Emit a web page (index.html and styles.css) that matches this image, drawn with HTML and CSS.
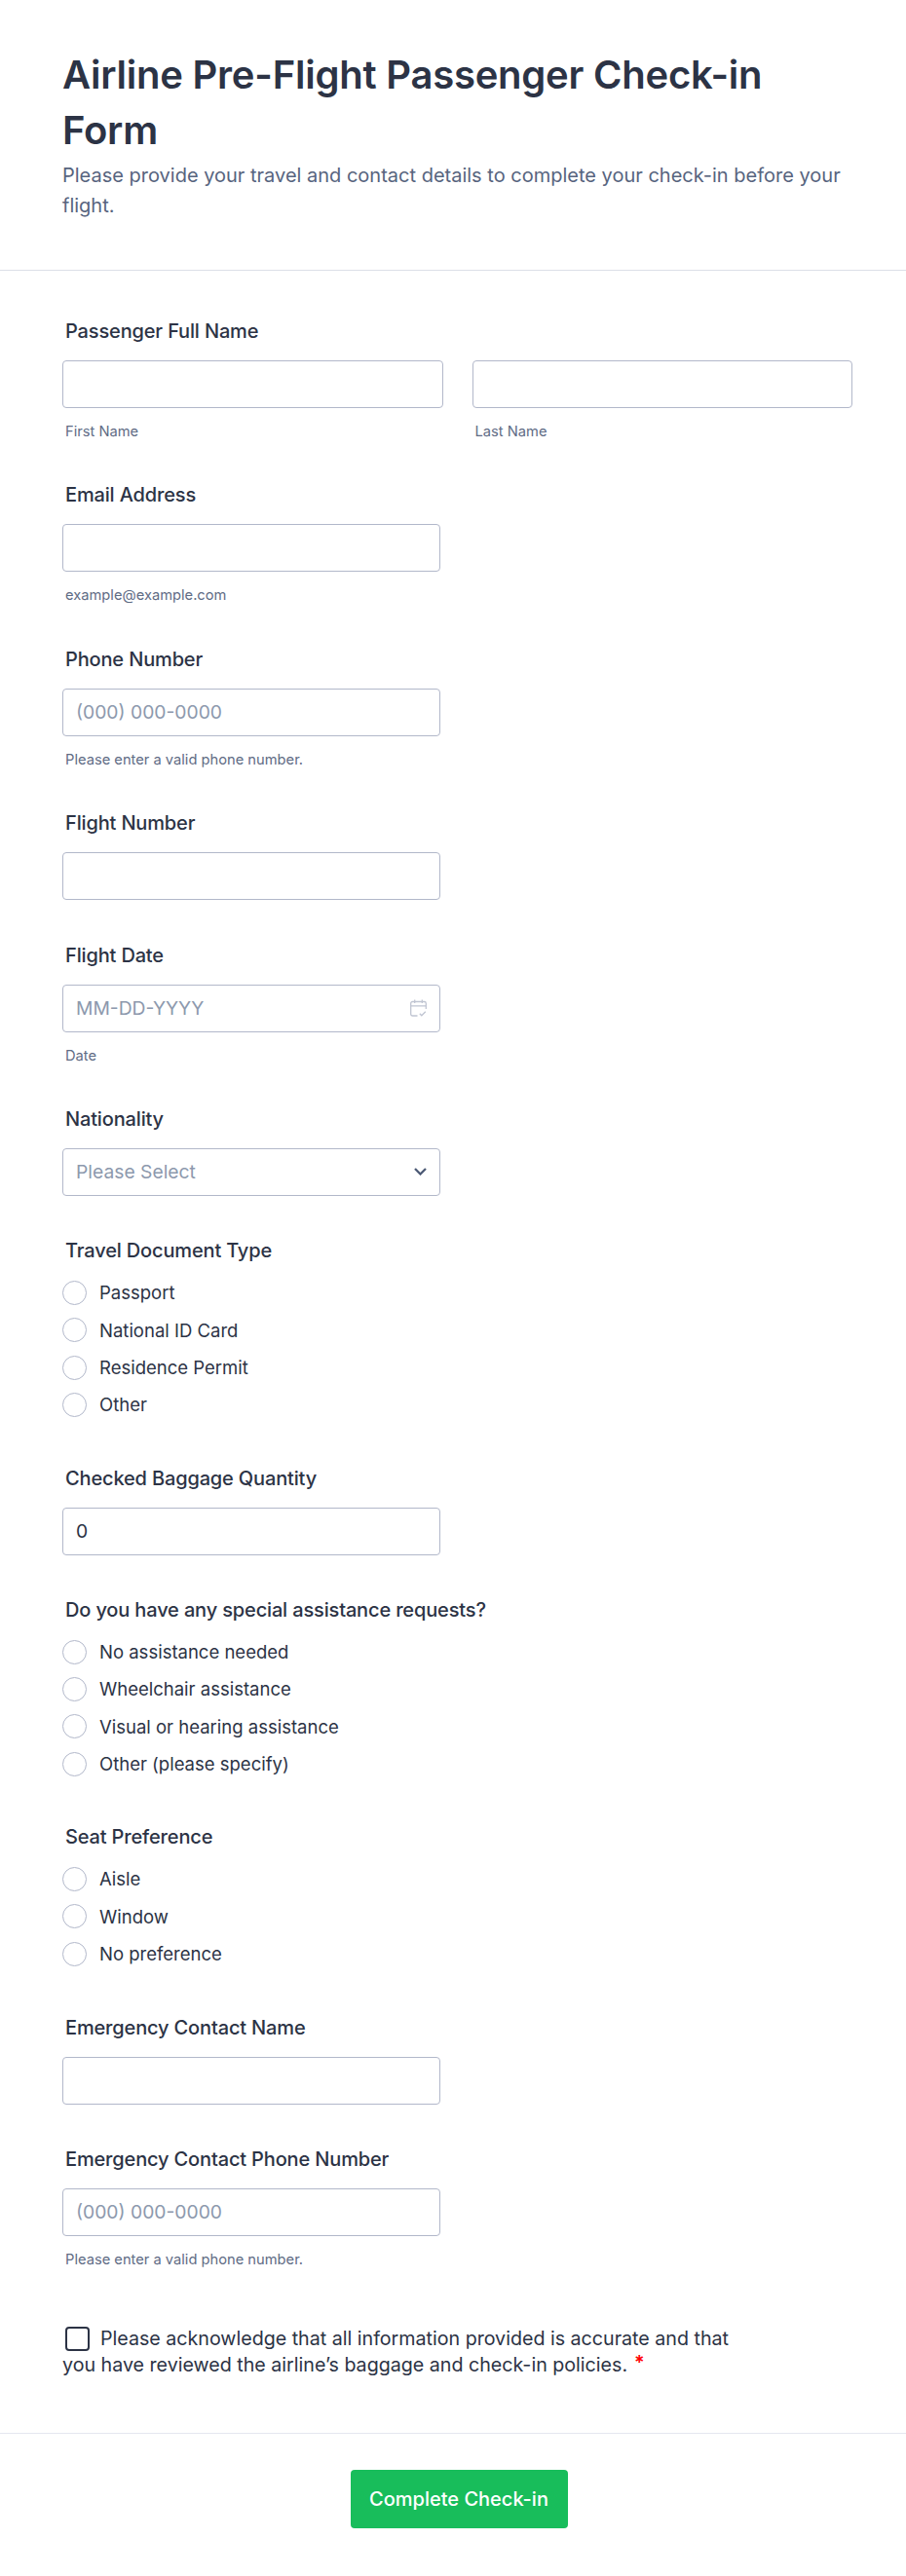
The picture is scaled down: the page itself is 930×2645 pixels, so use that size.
FILE: index.html
```html
<!DOCTYPE html>
<html lang="en">
<head>
<meta charset="utf-8">
<title>Airline Pre-Flight Passenger Check-in Form</title>
<link rel="stylesheet" href="styles.css">
</head>
<body>
<form class="form">
  <header class="head">
    <h1>Airline Pre-Flight Passenger Check-in Form</h1>
    <p>Please provide your travel and contact details to complete your check-in before your flight.</p>
  </header>
  <div class="fields">
    <div class="field">
      <div class="label">Passenger Full Name</div>
      <div class="pair">
        <div class="col"><div class="input"></div><div class="sub">First Name</div></div>
        <div class="col"><div class="input"></div><div class="sub">Last Name</div></div>
      </div>
    </div>
    <div class="field">
      <div class="label">Email Address</div>
      <div class="input short"></div>
      <div class="sub">example@example.com</div>
    </div>
    <div class="field">
      <div class="label">Phone Number</div>
      <div class="input short ph">(000) 000-0000</div>
      <div class="sub">Please enter a valid phone number.</div>
    </div>
    <div class="field">
      <div class="label">Flight Number</div>
      <div class="input short"></div>
    </div>
    <div class="field">
      <div class="label">Flight Date</div>
      <div class="input short ph spread">MM-DD-YYYY
        <svg class="cal" width="17" height="18" viewBox="0 0 17 18" fill="none" stroke="#c0c5d2" stroke-width="1.300"><path d="M7.500 17H2.500A1.800 1.800 0 0 1 .7 15.200V4.300A1.800 1.800 0 0 1 2.500 2.500h12a1.800 1.800 0 0 1 1.800 1.800V10M.7 6.800h15.600M4.700 .5v3.500M12.300 .5v3.500M9.800 14.800l2 2 4-4"/></svg>
      </div>
      <div class="sub">Date</div>
    </div>
    <div class="field">
      <div class="label">Nationality</div>
      <div class="input short ph spread">Please Select
        <svg class="chev" width="13" height="8" viewBox="0 0 13 8" fill="none" stroke="#4c5a75" stroke-width="2.300"><path d="M1 1l5.500 5.500L12 1"/></svg>
      </div>
    </div>
    <div class="field field-radio">
      <div class="label">Travel Document Type</div>
      <div class="radios">
        <div class="radio"><span class="dot"></span>Passport</div>
        <div class="radio"><span class="dot"></span>National ID Card</div>
        <div class="radio"><span class="dot"></span>Residence Permit</div>
        <div class="radio"><span class="dot"></span>Other</div>
      </div>
    </div>
    <div class="field">
      <div class="label">Checked Baggage Quantity</div>
      <div class="input short val">0</div>
    </div>
    <div class="field field-radio">
      <div class="label">Do you have any special assistance requests?</div>
      <div class="radios">
        <div class="radio"><span class="dot"></span>No assistance needed</div>
        <div class="radio"><span class="dot"></span>Wheelchair assistance</div>
        <div class="radio"><span class="dot"></span>Visual or hearing assistance</div>
        <div class="radio"><span class="dot"></span>Other (please specify)</div>
      </div>
    </div>
    <div class="field field-radio">
      <div class="label">Seat Preference</div>
      <div class="radios">
        <div class="radio"><span class="dot"></span>Aisle</div>
        <div class="radio"><span class="dot"></span>Window</div>
        <div class="radio"><span class="dot"></span>No preference</div>
      </div>
    </div>
    <div class="field">
      <div class="label">Emergency Contact Name</div>
      <div class="input short"></div>
    </div>
    <div class="field">
      <div class="label">Emergency Contact Phone Number</div>
      <div class="input short ph">(000) 000-0000</div>
      <div class="sub">Please enter a valid phone number.</div>
    </div>
    <div class="ack"><span class="box"></span>Please acknowledge that all information provided is accurate and that you have reviewed the airline’s baggage and check-in policies.<span class="req">*</span></div>
  </div>
  <footer class="foot"><button type="button" class="submit">Complete Check-in</button></footer>
</form>
</body>
</html>
```
FILE: styles.css
```css
* { box-sizing: border-box; }
html, body { margin: 0; padding: 0; background: #fff; }
body { font-family: Inter, "Liberation Sans", sans-serif; color: #2c3345; }
.form { width: 930px; height: 2645px; display: flex; flex-direction: column; }
.head { padding: 48px 64px 0; border-bottom: 1px solid #dcdfe8; height: 278px; }
.head h1 { margin: 0; font-size: 40px; line-height: 57px; font-weight: 600; letter-spacing: -0.23px; color: #2c3345; }
.head p { margin: 3px 0 0; font-size: 20px; line-height: 31px; color: #57647e; }
.fields { padding: 50px 64px 0; height: 2220px; }
.field { margin-bottom: 44.400px; }
.field-radio { margin-bottom: 50.400px; }
.label { font-size: 20px; font-weight: 500; line-height: 24px; letter-spacing: -0.15px; margin: 0 0 18px 3px; color: #2c3345; }
.pair { display: flex; gap: 30px; width: 811px; }
.col { flex: 1; }
.input { height: 49px; border: 1px solid #b2b8ca; border-radius: 4px; background: #fff; font-size: 19.300px; line-height: 47px; padding: 0 13px; }
.short { width: 388px; }
.ph { color: #8d99ad; }
.val { color: #2c3345; }
.spread { display: flex; align-items: center; justify-content: space-between; }
.sub { font-size: 14.700px; line-height: 18px; margin: 15px 0 0 3px; color: #5f6c85; }
.radios { display: flex; flex-direction: column; gap: 12.330px; }
.radio { display: flex; align-items: center; gap: 13px; font-size: 18.500px; line-height: 26px; color: #2c3345; }
.dot { width: 25px; height: 25px; border: 1px solid #b2b8ca; border-radius: 50%; }
.ack { width: 700px; margin-top: 59px; font-size: 19.650px; line-height: 27px; color: #2c3345; }
.box { display: inline-block; width: 25px; height: 25px; border: 2px solid #2c3345; border-radius: 4px; margin: 0 11px 0 3px; vertical-align: -6px; }
.req { color: #f00; margin-left: 7px; font-weight: 600; position: relative; top: -2px; }
.foot { border-top: 1px solid #e5e7ef; flex: 1; display: flex; justify-content: center; padding: 37px 0 0 12px; }
.submit { width: 223px; height: 60px; border: 0; border-radius: 4px; background: #18bd5b; color: #fff; font: 500 20px Inter, sans-serif; }
```
